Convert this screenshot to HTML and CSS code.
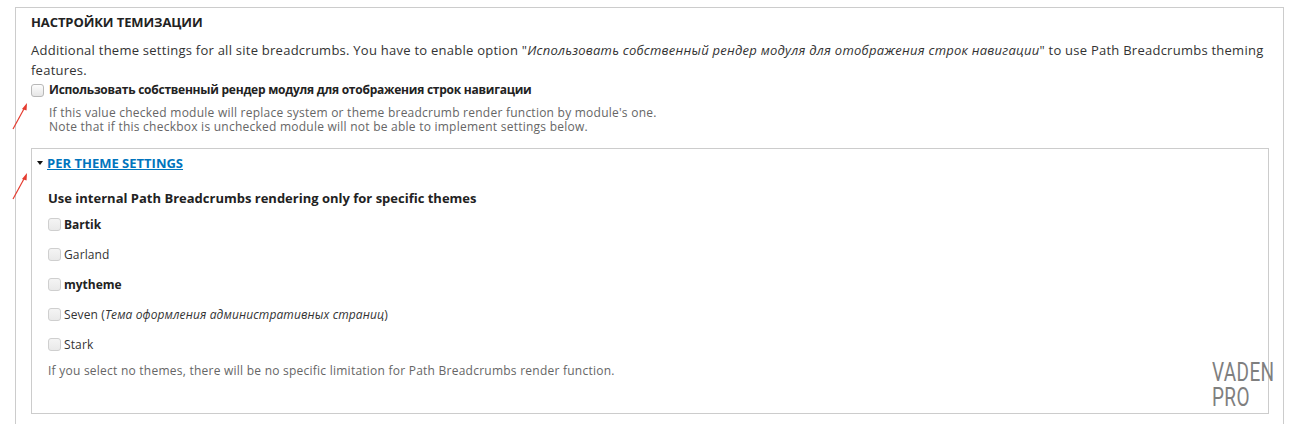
FILE: index.html
```html
<!DOCTYPE html>
<html lang="ru">
<head>
<meta charset="utf-8">
<title>Настройки темизации</title>
<link rel="stylesheet" href="styles.css">
</head>
<body>
<div class="page">
  <div class="fieldset outer">
    <div class="legend">Настройки темизации</div>
    <div class="description">Additional theme settings for all site breadcrumbs. You have to enable option "<em>Использовать собственный рендер модуля для отображения строк навигации</em>" to use Path Breadcrumbs theming features.</div>
    <label class="check main-check">
      <input type="checkbox" class="box">
      <span>Использовать собственный рендер модуля для отображения строк навигации</span>
    </label>
    <div class="help indent">If this value checked module will replace system or theme breadcrumb render function by module's one.<br>Note that if this checkbox is unchecked module will not be able to implement settings below.</div>

    <div class="fieldset inner">
      <div class="summary"><span class="tri"></span><a href="#" class="summary-link">Per theme settings</a></div>
      <div class="group-title">Use internal Path Breadcrumbs rendering only for specific themes</div>
      <div class="options">
        <label class="check option"><input type="checkbox" class="box" disabled><span class="b">Bartik</span></label>
        <label class="check option"><input type="checkbox" class="box" disabled><span>Garland</span></label>
        <label class="check option"><input type="checkbox" class="box" disabled><span class="b">mytheme</span></label>
        <label class="check option"><input type="checkbox" class="box" disabled><span>Seven (<em>Тема оформления административных страниц</em>)</span></label>
        <label class="check option"><input type="checkbox" class="box" disabled><span>Stark</span></label>
      </div>
      <div class="help">If you select no themes, there will be no specific limitation for Path Breadcrumbs render function.</div>
    </div>
  </div>

  <svg class="arrow arrow-1" width="20" height="30" viewBox="0 0 20 30">
    <line x1="2" y1="28" x2="14" y2="6" stroke="#e53b2f" stroke-width="1.2"/>
    <polygon points="16,2 11,8 15.5,9.5" fill="#e53b2f"/>
  </svg>
  <svg class="arrow arrow-2" width="20" height="30" viewBox="0 0 20 30">
    <line x1="2" y1="28" x2="14" y2="6" stroke="#e53b2f" stroke-width="1.2"/>
    <polygon points="16,2 11,8 15.5,9.5" fill="#e53b2f"/>
  </svg>
  <div class="watermark">
    <div class="wm-line">VADEN</div>
    <div class="wm-line">PRO</div>
  </div>
</div>
</body>
</html>
```
FILE: styles.css
```css
html, body {
  margin: 0;
  padding: 0;
  background: #fff;
}
body {
  font-family: "Open Sans", "Noto Sans", sans-serif;
  font-size: 13px;
  color: #333;
  overflow: hidden;
  height: 425px;
}
.page {
  position: relative;
  padding-top: 7px;
  height: 418px;
}
.fieldset {
  border: 1px solid #ccc;
  box-sizing: border-box;
}
.outer {
  margin-left: 15px;
  width: 1269px;
  border-bottom: none;
  padding: 6px 15px 10px 15px;
}
.legend {
  font-weight: 700;
  text-transform: uppercase;
  line-height: 16px;
  font-size: 13px;
  color: #222;
  letter-spacing: -0.1px;
}
.description {
  margin-top: 10px;
  line-height: 20px;
  font-size: 13px;
  letter-spacing: 0.25px;
}
.description em {
  font-style: italic;
  color: #333;
}
.check {
  display: flex;
  align-items: center;
  gap: 5px;
}
.main-check {
  margin-top: 2px;
  height: 16px;
  line-height: 16px;
  font-weight: 700;
  font-size: 12px;
  color: #222;
  letter-spacing: -0.25px;
}
.box {
  appearance: none;
  -webkit-appearance: none;
  width: 13px;
  height: 13px;
  margin: 0;
  border: 1px solid #b8b8b8;
  border-radius: 3px;
  background: linear-gradient(#fdfdfd, #e6e6e6);
  box-sizing: border-box;
  flex: none;
}
.box:disabled {
  border-color: #cfcfcf;
  background: linear-gradient(#f4f4f4, #e9e9e9);
}
.help {
  font-size: 12px;
  line-height: 14px;
  color: #666;
  letter-spacing: 0.24px;
}
.indent {
  margin-top: 8px;
  padding-left: 18px;
}
.inner {
  margin-top: 14px;
  width: 1238px;
  padding: 6px 16px 35px 16px;
}
.summary {
  display: flex;
  align-items: center;
  line-height: 16px;
  margin-left: -11px;
  gap: 4px;
}
.tri {
  width: 0;
  height: 0;
  border-left: 3.5px solid transparent;
  border-right: 3.5px solid transparent;
  border-top: 4px solid #111;
}
.summary-link {
  color: #0074bd;
  text-decoration: underline;
  font-weight: 700;
  text-transform: uppercase;
  font-size: 13px;
}
.group-title {
  margin-top: 19px;
  line-height: 16px;
  font-weight: 700;
  font-size: 13px;
  color: #222;
}
.options {
  margin-top: 3px;
  display: flex;
  flex-direction: column;
}
.option {
  height: 30px;
  font-size: 12px;
  color: #333;
  gap: 3px;
  letter-spacing: 0.12px;
}
.option .b {
  font-weight: 700;
  color: #222;
  letter-spacing: 0;
}
.options + .help {
  margin-top: 5px;
}
.arrow {
  position: absolute;
}
.arrow-1 {
  left: 11px;
  top: 101px;
}
.arrow-2 {
  left: 11px;
  top: 171px;
}
.watermark {
  position: absolute;
  left: 1212px;
  top: 360px;
  font-family: "Roboto", "DejaVu Sans", sans-serif;
  font-weight: 400;
  font-size: 25px;
  color: #7f7f7f;
  transform: scaleX(0.76);
  transform-origin: left top;
  letter-spacing: 0.5px;
}
.wm-line {
  line-height: 25px;
  height: 25px;
}
```
